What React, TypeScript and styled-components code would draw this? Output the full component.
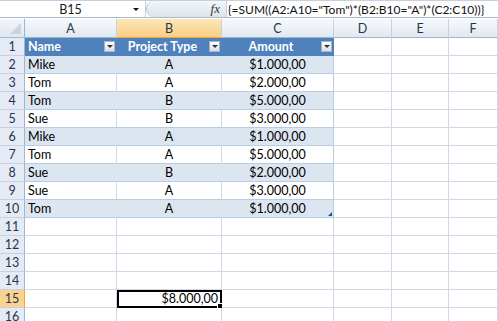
import styled, { createGlobalStyle } from "styled-components";

const GlobalStyle = createGlobalStyle`
  html, body {
    margin: 0;
    padding: 0;
    background: #ffffff;
    overflow: hidden;
  }
  body {
    font-family: "Lato", "Liberation Sans", sans-serif;
  }
`;

const rows = [
  { name: "Mike", type: "A", amount: "$1.000,00" },
  { name: "Tom", type: "A", amount: "$2.000,00" },
  { name: "Tom", type: "B", amount: "$5.000,00" },
  { name: "Sue", type: "B", amount: "$3.000,00" },
  { name: "Mike", type: "A", amount: "$1.000,00" },
  { name: "Tom", type: "A", amount: "$5.000,00" },
  { name: "Sue", type: "B", amount: "$2.000,00" },
  { name: "Sue", type: "A", amount: "$3.000,00" },
  { name: "Tom", type: "A", amount: "$1.000,00" },
];

const columns = ["A", "B", "C", "D", "E", "F"];

const Page = styled.div`
  width: 498px;
  height: 321px;
  overflow: hidden;
  display: flex;
  flex-direction: column;
  gap: 1px;
  background: #ffffff;
`;

const FormulaBar = styled.div`
  height: 21px;
  display: flex;
  align-items: stretch;
  border-top: 1px solid #c5d0de;
  border-bottom: 1px solid #a9b8cc;
  box-sizing: border-box;
  background: #ffffff;
`;

const NameBox = styled.div`
  width: 145px;
  display: flex;
  align-items: center;
  font-size: 12.5px;
  color: #1a1a1a;
  border-right: 1px solid #c5d0de;
`;

const NameText = styled.span`
  flex: 1;
  text-align: center;
  padding-left: 8px;
`;

const DropArrow = styled.span`
  width: 0;
  height: 0;
  border-left: 3px solid transparent;
  border-right: 3px solid transparent;
  border-top: 3px solid #111;
  margin-right: 6px;
`;

const Grip = styled.div`
  width: 80px;
  display: flex;
  align-items: center;
  justify-content: flex-end;
  padding-right: 6px;
  box-sizing: border-box;
  border-radius: 10px 0 0 10px;
  background: linear-gradient(#f3f6fa, #dde4ee);
  border-left: 1px solid #b9c6d8;
`;

const Fx = styled.span`
  font-family: "Liberation Serif", serif;
  font-style: italic;
  font-size: 13px;
  color: #333;
`;

const Formula = styled.div`
  flex: 1;
  display: flex;
  align-items: center;
  padding-left: 1px;
  font-size: 12px;
  color: #111;
  white-space: nowrap;
  overflow: hidden;
  border-left: 1px solid #c5d0de;
`;

const Sheet = styled.div`
  display: grid;
  grid-template-columns: 25px 92px 105px 112px 58px 57px 49px;
  grid-template-rows: 19px;
  grid-auto-rows: 18px;
  font-size: 12.5px;
`;

const Corner = styled.div`
  background: linear-gradient(#f3f6fa, #dfe6ef);
  border-right: 1px solid #9eb6ce;
  border-bottom: 1px solid #9eb6ce;
  box-sizing: border-box;
  position: relative;
  &::after {
    content: "";
    position: absolute;
    right: 3px;
    bottom: 3px;
    border-left: 11px solid transparent;
    border-bottom: 11px solid #c9d3e0;
  }
`;

const ColHead = styled.div<{ $active?: boolean }>`
  display: flex;
  align-items: center;
  justify-content: center;
  font-size: 12.5px;
  color: #27354a;
  box-sizing: border-box;
  border-right: 1px solid #c7d2e0;
  border-bottom: 1px solid ${(p) => (p.$active ? "#f2a33a" : "#9eb6ce")};
  background: ${(p) =>
    p.$active
      ? "linear-gradient(#fde6b8, #f9cf85)"
      : "linear-gradient(#f7f9fc, #e1e8f1)"};
`;

const RowHead = styled.div<{ $active?: boolean }>`
  display: flex;
  align-items: center;
  justify-content: center;
  font-size: 12.5px;
  color: #27354a;
  box-sizing: border-box;
  border-right: 1px solid ${(p) => (p.$active ? "#f2a33a" : "#9eb6ce")};
  border-bottom: 1px solid #c7d2e0;
  background: ${(p) => (p.$active ? "#f9d38f" : "#e4ebf5")};
`;

const Cell = styled.div<{
  $align?: "left" | "center" | "right";
  $fill?: string;
  $line?: string;
  $vline?: string;
}>`
  display: flex;
  align-items: center;
  justify-content: ${(p) =>
    p.$align === "center" ? "center" : p.$align === "right" ? "flex-end" : "flex-start"};
  padding: 0 3px;
  box-sizing: border-box;
  white-space: nowrap;
  color: #000;
  background: ${(p) => p.$fill || "#ffffff"};
  border-right: 1px solid ${(p) => p.$vline || "#d0d7e5"};
  border-bottom: 1px solid ${(p) => p.$line || "#d0d7e5"};
  position: relative;
`;

const HeadCell = styled(Cell)`
  color: #ffffff;
  font-weight: 700;
  background: #4f81bd;
  border-right-color: #4f81bd;
  border-bottom-color: #4f81bd;
  padding-right: 16px;
`;

const Filter = styled.span`
  position: absolute;
  right: 1px;
  top: 3px;
  width: 11px;
  height: 11px;
  box-sizing: border-box;
  border: 1px solid #a6b4c6;
  background: linear-gradient(#ffffff, #d9dfe8);
  display: flex;
  align-items: center;
  justify-content: center;
  &::after {
    content: "";
    border-left: 3px solid transparent;
    border-right: 3px solid transparent;
    border-top: 3px solid #333;
  }
`;

const Resize = styled.span`
  position: absolute;
  right: 1px;
  bottom: 1px;
  border-left: 4px solid transparent;
  border-bottom: 4px solid #1f4e99;
`;

const Selected = styled(Cell)`
  outline: 2px solid #000;
  outline-offset: -2px;
  &::after {
    content: "";
    position: absolute;
    right: -3px;
    bottom: -3px;
    width: 5px;
    height: 5px;
    background: #000;
    border: 1px solid #fff;
  }
`;

const band = "#dce6f1";
const bandLine = "#b8cce4";

export default function App() {
  return (
    <>
      <GlobalStyle />
      <Page>
        <FormulaBar>
          <NameBox>
            <NameText>B15</NameText>
            <DropArrow />
          </NameBox>
          <Grip>
            <Fx>fx</Fx>
          </Grip>
          <Formula>{'{=SUM((A2:A10="Tom")*(B2:B10="A")*(C2:C10))}'}</Formula>
        </FormulaBar>
        <Sheet>
          <Corner />
          {columns.map((c) => (
            <ColHead key={c} $active={c === "B"}>
              {c}
            </ColHead>
          ))}

          <RowHead>1</RowHead>
          <HeadCell>
            Name
            <Filter />
          </HeadCell>
          <HeadCell $align="center">
            Project Type
            <Filter />
          </HeadCell>
          <HeadCell $align="center">
            Amount
            <Filter />
          </HeadCell>
          <Cell />
          <Cell />
          <Cell />

          {rows.map((r, i) => {
            const shaded = i % 2 === 0;
            const fill = shaded ? band : "#ffffff";
            const vline = shaded ? band : "#d0d7e5";
            const last = i === rows.length - 1;
            return [
              <RowHead key={`h${i}`}>{i + 2}</RowHead>,
              <Cell key={`a${i}`} $fill={fill} $line={bandLine} $vline={vline}>
                {r.name}
              </Cell>,
              <Cell key={`b${i}`} $align="center" $fill={fill} $line={bandLine} $vline={vline}>
                {r.type}
              </Cell>,
              <Cell key={`c${i}`} $align="center" $fill={fill} $line={bandLine} $vline={bandLine}>
                {r.amount}
                {last && <Resize />}
              </Cell>,
              <Cell key={`d${i}`} />,
              <Cell key={`e${i}`} />,
              <Cell key={`f${i}`} />,
            ];
          })}

          {[11, 12, 13, 14, 15, 16].map((n) => [
            <RowHead key={`h${n}`} $active={n === 15}>
              {n}
            </RowHead>,
            <Cell key={`a${n}`} />,
            n === 15 ? (
              <Selected key={`b${n}`} $align="right">
                $8.000,00
              </Selected>
            ) : (
              <Cell key={`b${n}`} />
            ),
            <Cell key={`c${n}`} />,
            <Cell key={`d${n}`} />,
            <Cell key={`e${n}`} />,
            <Cell key={`f${n}`} />,
          ])}
        </Sheet>
      </Page>
    </>
  );
}
